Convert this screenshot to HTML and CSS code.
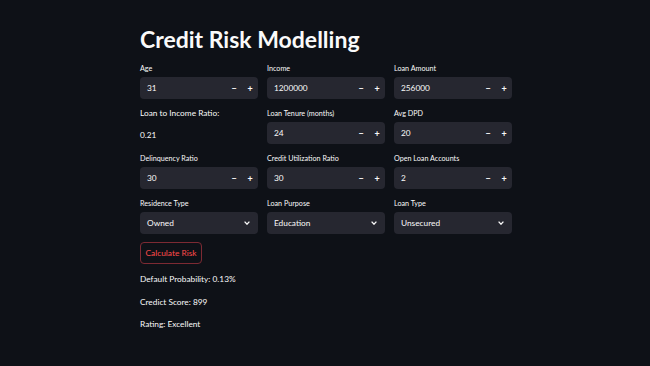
FILE: index.html
```html
<!DOCTYPE html>
<html>
<head>
<meta charset="utf-8">
<link rel="stylesheet" href="styles.css">
</head>
<body>
<div class="app">
  <main class="main">
    <h1 class="title">Credit Risk Modelling</h1>

    <div class="row">
      <div class="field">
        <label class="label">Age</label>
        <div class="num"><span class="val">31</span><span class="step">−</span><span class="step">+</span></div>
      </div>
      <div class="field">
        <label class="label">Income</label>
        <div class="num"><span class="val">1200000</span><span class="step">−</span><span class="step">+</span></div>
      </div>
      <div class="field">
        <label class="label">Loan Amount</label>
        <div class="num"><span class="val">256000</span><span class="step">−</span><span class="step">+</span></div>
      </div>
    </div>

    <div class="row">
      <div class="md">
        <p class="md-line">Loan to Income Ratio:</p>
        <p class="md-line md-val">0.21</p>
      </div>
      <div class="field">
        <label class="label">Loan Tenure (months)</label>
        <div class="num"><span class="val">24</span><span class="step">−</span><span class="step">+</span></div>
      </div>
      <div class="field">
        <label class="label">Avg DPD</label>
        <div class="num"><span class="val">20</span><span class="step">−</span><span class="step">+</span></div>
      </div>
    </div>

    <div class="row">
      <div class="field">
        <label class="label">Delinquency Ratio</label>
        <div class="num"><span class="val">30</span><span class="step">−</span><span class="step">+</span></div>
      </div>
      <div class="field">
        <label class="label">Credit Utilization Ratio</label>
        <div class="num"><span class="val">30</span><span class="step">−</span><span class="step">+</span></div>
      </div>
      <div class="field">
        <label class="label">Open Loan Accounts</label>
        <div class="num"><span class="val">2</span><span class="step">−</span><span class="step">+</span></div>
      </div>
    </div>

    <div class="row">
      <div class="field">
        <label class="label">Residence Type</label>
        <div class="select"><span class="val">Owned</span><svg class="chev" width="6" height="4" viewBox="0 0 6 4"><path d="M0.6 0.6 L3 3.2 L5.4 0.6" fill="none" stroke="#fafafa" stroke-width="1.3"/></svg></div>
      </div>
      <div class="field">
        <label class="label">Loan Purpose</label>
        <div class="select"><span class="val">Education</span><svg class="chev" width="6" height="4" viewBox="0 0 6 4"><path d="M0.6 0.6 L3 3.2 L5.4 0.6" fill="none" stroke="#fafafa" stroke-width="1.3"/></svg></div>
      </div>
      <div class="field">
        <label class="label">Loan Type</label>
        <div class="select"><span class="val">Unsecured</span><svg class="chev" width="6" height="4" viewBox="0 0 6 4"><path d="M0.6 0.6 L3 3.2 L5.4 0.6" fill="none" stroke="#fafafa" stroke-width="1.3"/></svg></div>
      </div>
    </div>

    <div class="btn-row"><button class="btn">Calculate Risk</button></div>

    <div class="results">
      <p class="result">Default Probability: 0.13%</p>
      <p class="result">Credict Score: 899</p>
      <p class="result">Rating: Excellent</p>
    </div>
  </main>
</div>
</body>
</html>
```

FILE: styles.css
```css
* { box-sizing: border-box; }
html, body { margin: 0; padding: 0; background: #0e1117; }
body {
  font-family: Lato, "Noto Sans", sans-serif;
  color: #fafafa;
  -webkit-font-smoothing: antialiased;
}
.app { min-height: 366px; background: #0e1117; }
.main {
  width: 372px;
  margin-left: 140px;
  padding-top: 25px;
  display: flex;
  flex-direction: column;
  gap: 8px;
}
.title {
  margin: 0 0 1px 0;
  font-size: 23px;
  line-height: 28px;
  font-weight: 700;
  color: #fafafa;
}
.row {
  display: grid;
  grid-template-columns: 118px 118px 118px;
  column-gap: 9px;
}
.field { display: flex; flex-direction: column; }
.label {
  font-size: 7.2px;
  line-height: 13px;
  height: 15px;
  color: #fafafa;
}
.num, .select {
  height: 22px;
  background: #262730;
  border-radius: 4px;
  display: flex;
  align-items: center;
  font-size: 8.3px;
  color: #fafafa;
}
.val { flex: 1; padding-left: 7px; }
.step {
  width: 16px;
  text-align: center;
  font-size: 9px;
  font-weight: 700;
}
.select { padding-right: 8px; }
.chev { display: block; }
.md { display: flex; flex-direction: column; }
.md-line {
  margin: 0;
  font-size: 8.3px;
  line-height: 13px;
}
.md-val { margin-top: 9px; }
.btn-row { display: flex; }
.btn {
  height: 22px;
  width: 62px;
  padding: 0;
  background: #0e1117;
  border: 1px solid #7d2a33;
  border-radius: 4px;
  color: #ff4b4b;
  font-family: Lato, "Noto Sans", sans-serif;
  font-size: 8.4px;
}
.results {
  display: flex;
  flex-direction: column;
  gap: 8.5px;
}
.result {
  margin: 0;
  font-size: 8.3px;
  line-height: 14px;
  color: #fafafa;
}
```
